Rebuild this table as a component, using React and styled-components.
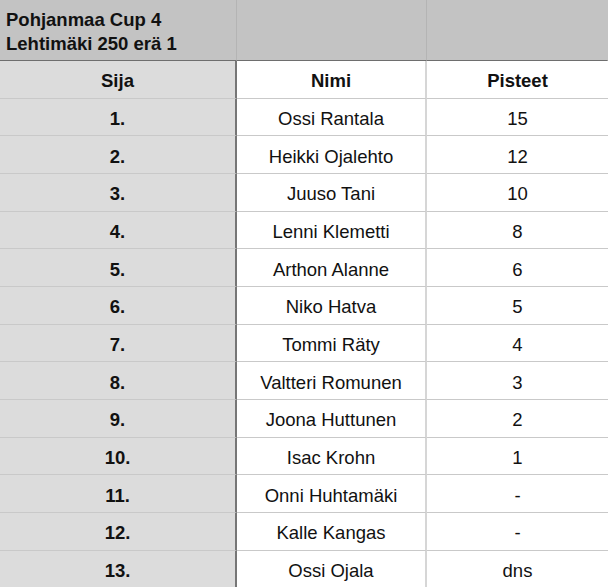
import React from 'react'
import styled, { createGlobalStyle } from 'styled-components'

const Global = createGlobalStyle`
  body {
    margin: 0;
    background: #ffffff;
    font-family: "Liberation Sans", Arial, sans-serif;
    color: #111;
  }
`

const rows = [
  ['1.', 'Ossi Rantala', '15'],
  ['2.', 'Heikki Ojalehto', '12'],
  ['3.', 'Juuso Tani', '10'],
  ['4.', 'Lenni Klemetti', '8'],
  ['5.', 'Arthon Alanne', '6'],
  ['6.', 'Niko Hatva', '5'],
  ['7.', 'Tommi Räty', '4'],
  ['8.', 'Valtteri Romunen', '3'],
  ['9.', 'Joona Huttunen', '2'],
  ['10.', 'Isac Krohn', '1'],
  ['11.', 'Onni Huhtamäki', '-'],
  ['12.', 'Kalle Kangas', '-'],
  ['13.', 'Ossi Ojala', 'dns'],
]

const Sheet = styled.div`
  width: 608px;
  height: 587px;
  overflow: hidden;
  display: grid;
  grid-template-columns: 237px 190px 1fr;
  grid-template-rows: 61px;
  grid-auto-rows: 37.67px;
`

const TitleCell = styled.div`
  background: #c3c3c3;
  border-bottom: 1px solid #6e6e6e;
  border-right: 1px solid ${p => (p.$last ? 'transparent' : '#b4b4b4')};
  padding: 8px 0 0 6px;
  font-weight: bold;
  font-size: 18.5px;
  line-height: 24px;
  box-sizing: border-box;
`

const Cell = styled.div`
  display: flex;
  align-items: center;
  justify-content: center;
  box-sizing: border-box;
  font-size: 18.5px;
  font-weight: ${p => (p.$bold ? 'bold' : 'normal')};
  background: ${p => (p.$rank ? '#dcdcdc' : '#ffffff')};
  border-bottom: 1px solid #c9c9c9;
  border-right: ${p =>
    p.$rank ? '2px solid #767676' : p.$mid ? '2px solid #d6d6d6' : 'none'};
  padding-top: 4px;
`

export default function App() {
  return (
    <>
      <Global />
      <Sheet>
        <TitleCell>
          Pohjanmaa Cup 4
          <br />
          Lehtimäki 250 erä 1
        </TitleCell>
        <TitleCell />
        <TitleCell $last />
        <Cell $rank $bold>Sija</Cell>
        <Cell $mid $bold>Nimi</Cell>
        <Cell $bold>Pisteet</Cell>
        {rows.map(([rank, name, pts]) => (
          <React.Fragment key={rank}>
            <Cell $rank $bold>{rank}</Cell>
            <Cell $mid>{name}</Cell>
            <Cell>{pts}</Cell>
          </React.Fragment>
        ))}
      </Sheet>
    </>
  )
}
